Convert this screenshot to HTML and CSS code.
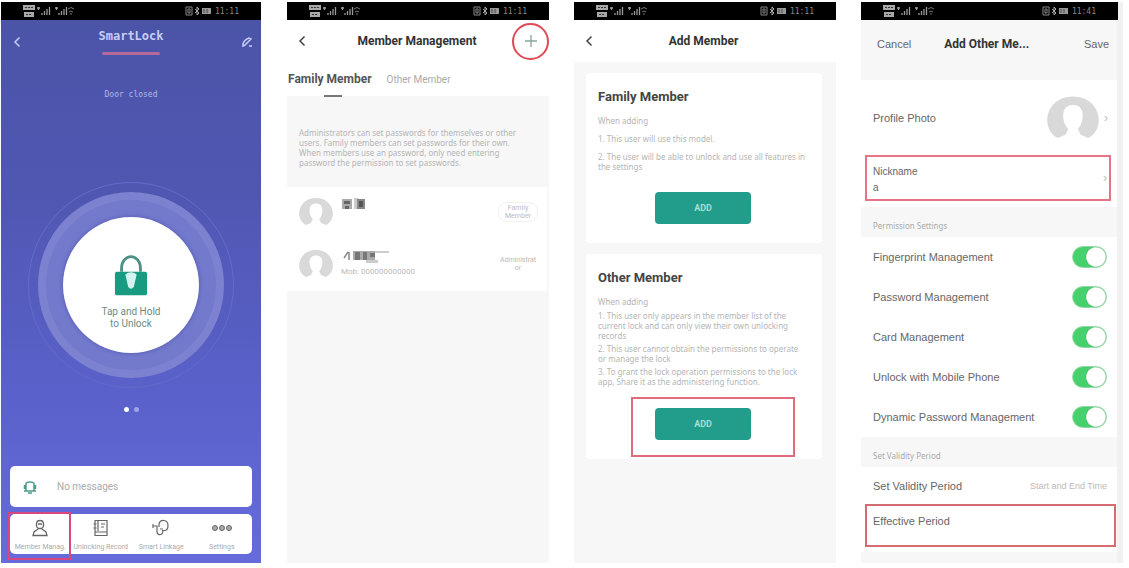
FILE: index.html
```html
<!DOCTYPE html>
<html lang="en">
<head>
<meta charset="utf-8">
<title>Smart Lock</title>
<link rel="stylesheet" href="styles.css">
</head>
<body>
<svg class="defs" aria-hidden="true">
  <symbol id="signal" viewBox="0 0 52 14">
    <path d="M0 1h12v5H0zM1 8h10v5H1z" fill="#a9a9a9"/>
    <path d="M2 3.500h8M3 10.500h6" stroke="#333" stroke-width="1" stroke-dasharray="2 1"/>
    <path d="M14 4h3M15.500 3v3M19 11V9M21.500 11V7M24 11V5M26.500 11V3M32 4h3M33.500 3v3M36 11V9M38.500 11V7M41 11V5M43.500 11V3" stroke="#999" stroke-width="1.300"/>
    <path d="M45 5q3-3 6 0M46 8q2-2 4 0M47 10h2" stroke="#777" fill="none"/>
  </symbol>
  <symbol id="state" viewBox="0 0 28 12">
    <path d="M1 2h6v8H1zM3 4h2v4H3z" fill="none" stroke="#888"/>
    <path d="M10 4l4 4-2 2V2l2 2-4 4" fill="none" stroke="#aaa"/>
    <path d="M17 3h9v6h-9z" fill="#999"/><path d="M19 4v4M22 4v4" stroke="#444"/>
  </symbol>
  <symbol id="back" viewBox="0 0 8 12"><path d="M6.500 1.500L2 6l4.500 4.500" fill="none" stroke="currentColor" stroke-width="1.500"/></symbol>
  <symbol id="avatar" viewBox="0 0 34 30">
    <path d="M7 28C-5 22-1 1 17 1s22 21 10 27l-5-2-2-4c4-5 4-15-3-15s-7 10-3 15l-2 4z" fill="#d9d9d9"/>
    <path d="M17 6.500c-8 0-7 9-5 13l2 3-1 3-5 3h18l-5-3-1-3 2-3c2-4 3-13-5-13z" fill="#fff"/>
  </symbol>
</svg>
<main class="screens">

<section class="phone home">
  <div class="status"><svg class="signal"><use href="#signal"/></svg><span><svg class="state"><use href="#state"/></svg>11:11</span></div>
  <header class="home-head">
    <button class="icon-btn" aria-label="Back"><svg class="chev"><use href="#back"/></svg></button>
    <h1>SmartLock</h1>
    <button class="icon-btn" aria-label="Edit"><svg class="pen" viewBox="0 0 12 12"><path d="M2 11V8q1-4 6-6l2 1-5 5-2 2M8 10h3" fill="none" stroke="currentColor" stroke-width="1.500"/></svg></button>
  </header>
  <div class="power"></div>
  <p class="door">Door closed</p>
  <div class="ring"><div class="ring-mid"><button class="unlock">
    <svg class="lock" viewBox="0 0 36 44"><path d="M8 18V14a10 12 0 0 1 20 0v4" fill="none" stroke="#4d9185" stroke-width="3"/><rect x="1" y="18" width="34" height="25" rx="2" fill="#199b81"/><path d="M12 21q6-5 12 0l-3 13q-3 4-6 0z" fill="#d5f3ee"/></svg>
    <span>Tap and Hold<br>to Unlock</span></button></div></div>
  <div class="dots"><i class="on"></i><i></i></div>
  <div class="message"><svg viewBox="0 0 14 14"><path d="M3 11V4q0-2 4-2t4 2v7zM1 11h3M10 11h3M5 13h4M1.500 5v4M12.500 5v4" fill="none" stroke="#4c9b8c" stroke-width="1.500"/></svg><span>No messages</span></div>
  <nav class="tools">
    <a href="#members" class="marked"><svg viewBox="0 0 18 18"><path d="M9 1.500c5 0 4 7 1.500 8h-3C5 8.500 4 1.500 9 1.500zM7 10l-4 3-1 3.500h14L15 13l-4-3M7 5h4" fill="none" stroke="currentColor" stroke-width="1.300"/></svg>Member Manag.</a>
    <a href="#records"><svg viewBox="0 0 18 18"><path d="M3 1.500h12v15H3zM6 1.500V12M3 13h12M9 5h4M9 8h3M1.500 5h3M1.500 9h3" fill="none" stroke="currentColor" stroke-width="1.200"/></svg>Unlocking Record</a>
    <a href="#linkage"><svg viewBox="0 0 18 18"><path d="M1 7h4v6q1 4 5 2l1-3M7 8V5q1-4 5-3.500t4 5-3 5H10M1 5v4M8 10h3" fill="none" stroke="currentColor" stroke-width="1.200"/></svg>Smart Linkage</a>
    <a href="#settings"><svg class="more" viewBox="0 0 22 18"><g fill="#aaa" stroke="#666"><circle cx="4" cy="9" r="2.500"/><circle cx="11" cy="9" r="2.500"/><circle cx="18" cy="9" r="2.500"/></g></svg>Settings</a>
  </nav>
</section>

<section class="phone">
  <div class="status"><svg class="signal"><use href="#signal"/></svg><span><svg class="state"><use href="#state"/></svg>11:11</span></div>
  <header class="bar">
    <button class="icon-btn" aria-label="Back"><svg class="chev"><use href="#back"/></svg></button>
    <h2>Member Management</h2>
    <button class="icon-btn plus" aria-label="Add"><svg viewBox="0 0 14 14"><path d="M7 1v12M1 7h12" stroke="#88a39d" stroke-width="1.300"/></svg></button>
  </header>
  <nav class="tabs"><a href="#family" class="active">Family Member</a><a href="#other">Other Member</a></nav>
  <p class="hint">Administrators can set passwords for themselves or other<br>users. Family members can set passwords for their own.<br>When members use an password, only need entering<br>password the permission to set passwords.</p>
  <ul class="members">
    <li><svg class="avatar"><use href="#avatar"/></svg>
      <div class="who"><svg class="mask" viewBox="0 0 50 14"><path d="M1 2h10v10H1z" fill="#aaa"/><path d="M3 4h6v3H3zM4 9h4v3H4z" fill="#666"/><path d="M13 1h4v11h-4z" fill="#ccc"/><path d="M16 2h8v10h-8z" fill="#888"/><path d="M18 4h4v6h-4z" fill="#555"/></svg></div>
      <span class="role pill">Family<br>Member</span></li>
    <li><svg class="avatar"><use href="#avatar"/></svg>
      <div class="who"><svg class="mask" viewBox="0 0 50 14"><path d="M3 9l4-6M8 3v8" stroke="#888" stroke-width="1.500"/><path d="M12 2h22v9H12z" fill="#aaa"/><path d="M14 3h5v8h-5zM22 3h4v8h-4zM29 4h5v4h-5z" fill="#777"/><path d="M34 2h14v2H34zM25 11h12v3H25z" fill="#ccc"/></svg><small>Mob: 000000000000</small></div>
      <span class="role">Administrat<br>or</span></li>
  </ul>
</section>

<section class="phone">
  <div class="status"><svg class="signal"><use href="#signal"/></svg><span><svg class="state"><use href="#state"/></svg>11:11</span></div>
  <header class="bar short">
    <button class="icon-btn" aria-label="Back"><svg class="chev"><use href="#back"/></svg></button>
    <h2>Add Member</h2><span></span>
  </header>
  <div class="cards">
    <article class="card roomy">
      <h3>Family Member</h3>
      <p>When adding</p>
      <p>1. This user will use this model.</p>
      <p>2. The user will be able to unlock and use all features in<br>the settings</p>
      <button class="add">ADD</button>
    </article>
    <article class="card">
      <h3>Other Member</h3>
      <p>When adding</p>
      <p>1. This user only appears in the member list of the<br>current lock and can only view their own unlocking<br>records</p>
      <p>2. This user cannot obtain the permissions to operate<br>or manage the lock</p>
      <p>3. To grant the lock operation permissions to the lock<br>app, Share it as the administering function.</p>
      <div class="add-marked"><button class="add">ADD</button></div>
    </article>
  </div>
</section>

<section class="phone form">
  <div class="status"><svg class="signal"><use href="#signal"/></svg><span><svg class="state"><use href="#state"/></svg>11:41</span></div>
  <header class="form-head"><button>Cancel</button><h2>Add Other Me...</h2><button>Save</button></header>
  <div class="photo row"><span>Profile Photo</span><svg class="avatar"><use href="#avatar"/></svg><b class="next">›</b></div>
  <div class="nick-wrap"><div class="nick"><label for="nick">Nickname</label><input id="nick" value="a"><b class="next">›</b></div></div>
  <h4>Permission Settings</h4>
  <label class="row">Fingerprint Management<input type="checkbox" class="switch" checked></label>
  <label class="row">Password Management<input type="checkbox" class="switch" checked></label>
  <label class="row">Card Management<input type="checkbox" class="switch" checked></label>
  <label class="row">Unlock with Mobile Phone<input type="checkbox" class="switch" checked></label>
  <label class="row">Dynamic Password Management<input type="checkbox" class="switch" checked></label>
  <h4>Set Validity Period</h4>
  <div class="row"><span>Set Validity Period</span><em>Start and End Time</em></div>
  <div class="period-wrap"><div class="period">Effective Period</div></div>
</section>
</main>
</body>
</html>
```
FILE: styles.css
```css
* { box-sizing: border-box; margin: 0; padding: 0; }
body { background: #fff; font-family: Roboto, "Liberation Sans", sans-serif; font-size: 12px; color: #555; }
button { border: 0; background: none; font: inherit; color: inherit; }
a { color: inherit; text-decoration: none; }
svg { display: block; }
.defs { position: absolute; width: 0; height: 0; }
.screens { display: grid; grid-template-columns: repeat(4, minmax(0, 1fr)); gap: 25px; min-height: 100vh; padding: 2px 6px 5px 0; }
.phone { display: flex; flex-direction: column; background: #f7f7f7; white-space: nowrap; }

.status { display: flex; justify-content: space-between; align-items: center; height: 18px; padding: 0 22px; background: #000; color: #888; font: 8px "DejaVu Sans Mono", monospace; }
.status span { display: flex; align-items: center; gap: 2px; }
.signal { width: 52px; height: 14px; }
.state { width: 28px; height: 12px; }
.icon-btn { display: grid; place-items: center; height: 20px; }
.chev { width: 8px; height: 12px; }

/* Lock home */
.home { margin: 0 1px; padding-bottom: 9px; background: linear-gradient(#4a54a6, #5057b2 35%, #5a61ca 70%, #666bdc); color: #c8cef8; }
.home-head { display: flex; justify-content: space-between; padding: 8px 8px 0 12px; }
.home-head h1 { font: bold 12px/16px "DejaVu Sans Mono", monospace; color: #c7cdf6; }
.home-head .icon-btn { padding-top: 8px; }
.pen { width: 12px; height: 12px; }
.power { width: 58px; height: 3px; margin: 4px auto 0; background: #b66a9c; border-radius: 2px; }
.door { margin-top: 35px; text-align: center; font: 8px/10px "DejaVu Sans Mono", monospace; color: #b0b8ee; }
.ring { display: grid; place-items: center; width: 206px; height: 206px; margin: 82px auto 0; border-radius: 50%; border: 1px solid #636cc9; }
.ring-mid { display: grid; place-items: center; width: 186px; height: 186px; border-radius: 50%; background: #7379cb; border: 8px solid #7c82cf; }
.unlock { display: flex; flex-direction: column; align-items: center; gap: 9px; width: 136px; height: 136px; padding-top: 37px; border-radius: 50%; background: #fff; box-shadow: 0 0 4px #5058b4; font-size: 10px; line-height: 12px; color: #6b8b88; }
.lock { width: 34px; height: 43px; }
.dots { display: flex; justify-content: center; gap: 5px; margin-top: 19px; }
.dots i { width: 5px; height: 5px; border-radius: 50%; background: #9da3ee; }
.dots .on { background: #fff; }
.message { display: flex; align-items: center; gap: 20px; height: 41px; margin: auto 9px 7px; padding: 0 13px; border-radius: 5px; background: #fff; font-size: 10px; color: #aaa; }
.message svg { width: 14px; height: 14px; }
.tools { display: grid; grid-template-columns: repeat(4, minmax(0, 1fr)); height: 40px; margin: 0 9px; border-radius: 5px; background: #fff; font-size: 7px; line-height: 8px; color: #aaa; }
.tools a { position: relative; display: flex; flex-direction: column; align-items: center; gap: 6px; padding-top: 5px; }
.tools svg { width: 18px; height: 18px; color: #666; }
.tools .more { width: 22px; }
.marked::after { content: ""; position: absolute; inset: -2px 0 -6px -2px; border: 2px solid #d9487c; }

/* Member list */
.bar { display: flex; align-items: center; justify-content: space-between; height: 42px; padding: 0 0 0 11px; background: #fff; color: #444; }
.bar h2, .form-head h2 { font-size: 12px; line-height: 16px; font-weight: 700; color: #333; }
.bar h2 { flex: 1; padding-left: 16px; text-align: center; }
.bar span { width: 20px; }
.bar .plus { width: 37px; height: 37px; border: 2px solid #df4a55; border-radius: 50%; }
.bar.short { padding-right: 8px; }
.bar.short h2 { padding-left: 6px; }
.plus svg { width: 14px; height: 14px; }
.tabs { display: flex; align-items: center; gap: 15px; height: 34px; padding: 0 1px; background: #fff; font-size: 10px; color: #aaa; }
.tabs .active { position: relative; font-size: 12px; font-weight: 700; color: #555; }
.tabs .active::after { content: ""; position: absolute; left: 36px; right: 30px; bottom: -11px; height: 2px; background: #777; }
.hint { padding: 32px 12px 19px; font: 8px/10px "Noto Sans", sans-serif; color: #b5b5b5; }
.members { list-style: none; margin-right: 2px; background: #fff; }
.members li { display: flex; align-items: center; gap: 8px; height: 52px; padding: 0 9px 2px 12px; }
.avatar { width: 34px; height: 30px; }
.who { flex: 1; align-self: flex-start; padding-top: 10px; }
.mask { width: 50px; height: 14px; }
.who small { display: block; padding-top: 4px; font-size: 8px; line-height: 10px; color: #bbb; }
.role { width: 40px; padding: 1px 0; text-align: center; font-size: 7px; line-height: 8px; color: #bbb; }
.pill { border: 1px solid #f0f0f0; border-radius: 9px; }

/* Add member */
.cards { display: grid; gap: 11px; padding: 11px 14px 0 12px; }
.card { padding: 16px 12px 19px; background: #fff; border-radius: 3px; font: 8px/10px "Noto Sans", sans-serif; color: #b5b5b5; }
.card h3 { margin-bottom: 11px; font: 700 13px/16px Roboto, sans-serif; color: #444; }
.card p { margin-bottom: 2px; }
.card p + p { margin-top: 3px; }
.card h3 + p { margin-bottom: 4px; }
.card h3 + p + p { margin-top: 0; }
.roomy p, .roomy h3 + p { margin-bottom: 8px; }
.roomy p + p, .roomy h3 + p + p { margin-top: 0; }
.add { display: block; width: 96px; height: 32px; margin: 20px auto 0 57px; border-radius: 4px; background: #229c8b; color: #a9ddd3; font: 700 9px Roboto, sans-serif; }
.add-marked { width: 164px; margin: 10px 0 -17px 33px; padding: 9px 22px 15px; border: 2px solid #e06b7b; }
.add-marked .add { margin: 0; }

/* Member form */
.form { padding-right: 6px; background: linear-gradient(#f1f1f1, #f1f1f1) right / 6px 100% no-repeat #f7f7f7; font-family: "Liberation Sans", sans-serif; font-size: 11px; color: #666; }
.form .status { margin-right: -1px; }
.form-head { display: flex; height: 60px; padding: 16px 8px 0 16px; line-height: 16px; }
.form-head h2 { flex: 1; padding-left: 33px; font-family: Roboto, sans-serif; }
.form-head button { align-self: flex-start; }
.row { display: flex; align-items: center; justify-content: space-between; height: 40px; padding: 0 10px 0 12px; background: #fff; }
.photo { height: 75px; padding-right: 9px; }
.photo span { flex: 1; }
.photo .avatar { width: 52px; height: 46px; }
.next { padding-left: 5px; font-size: 12px; font-weight: 400; color: #bbb; }
.nick-wrap { height: 52px; padding: 0 6px 0 4px; background: #fff; }
.nick { position: relative; display: grid; height: 46px; padding: 8px 6px 4px; border: 2px solid #e57486; font-size: 10px; line-height: 14px; }
.nick input { width: 100%; border: 0; outline: 0; background: none; font: inherit; color: #666; }
.nick .next { position: absolute; right: 2px; top: 14px; }
.form h4 { height: 30px; padding: 14px 12px 0; font: 8px/10px "Noto Sans", sans-serif; color: #aaa; }
.switch { appearance: none; width: 35px; height: 22px; border-radius: 11px; border: 1px solid #93d9a6; background: radial-gradient(circle at 23px 10px, #fff 9px, #b5c8b9 10px, #46d16d 10px); }
.row em { font-size: 9px; font-style: normal; color: #bbb; }
.form h4 + div { height: 37px; }
.period-wrap { padding: 0 1px 5px 4px; background: #fff; }
.period { height: 43px; padding: 8px 6px; border: 2px solid #d66a72; line-height: 14px; }
```
